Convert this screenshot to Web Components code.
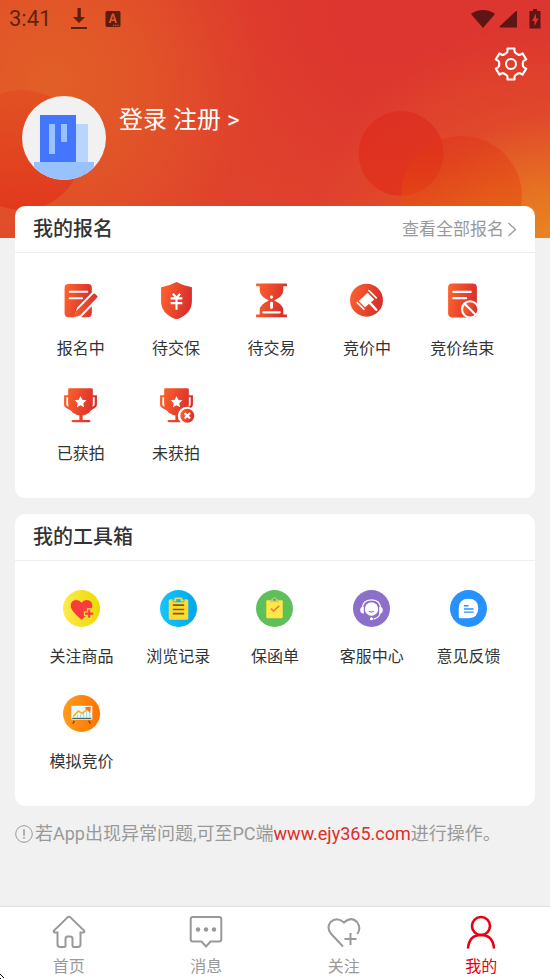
<!DOCTYPE html>
<html lang="zh-CN">
<head>
<meta charset="utf-8">
<meta name="viewport" content="width=device-width, initial-scale=1">
<title>我的</title>
<style>
  body { margin: 0; background: #f1f1f1; color: #333; font-family: Roboto, "Noto Sans CJK SC", sans-serif; }
</style>
</head>
<body>
<my-page></my-page>
<script>
const RED = '<defs><linearGradient id="g" x1="0" x2="1" y1="0" y2=".25"><stop stop-color="#ff652d"/><stop offset="1" stop-color="#d9302c"/></linearGradient></defs>';
const CUP = '<path fill="url(#g)" fill-rule="evenodd" d="M6 2.500q0-1.200 1.200-1.200h21.600q1.200 0 1.200 1.200V8h4v9q0 2.200-1.800 3.300l-4.200 2.500q-2 3.400-7.900 4.900v4.300h5.700q2 0 2 1.200t-2 1.200H11.200q-2 0-2-1.200t2-1.200h5.700v-4.300q-5.900-1.500-8.400-4.900l-4.700-2.500Q2 19.200 2 17V8h4zM6 10H4.200v6.500q0 1.500 1 2.100l1.300.9Q6 18 6 16zM30 10v6q0 2-.5 3.500l1.300-.9q1-.6 1-2.100V10z"/><path fill="#fff" d="m18 8.700 1.700 3.700 4 .5-3 2.800.8 4-3.500-2-3.500 2 .8-4-3-2.800 4-.5z"/>';
const disc = c => `<circle cx="18" cy="18" r="18" fill="${c}"/>`;
const grad = (a, b) => `<defs><linearGradient id="g"><stop stop-color="${a}"/><stop offset="1" stop-color="${b}"/></linearGradient></defs>` + disc('url(#g)');
const ICONS = {
  apply: ['0 0 36 36', RED + '<path fill="url(#g)" d="M6.500 2h19q3.500 0 3.500 3.500v4.800L14.600 25l-2.500 9.300H6.500q-4 0-4-4V6q0-4 4-4z"/><path d="M7.500 9.500h17M7.500 15.800h12" stroke="#fff" stroke-width="2" stroke-linecap="round"/><path fill="url(#g)" d="M30.500 11.500q.8-.7 1.600 0l2.200 2q.8.800 0 1.600L17.500 32.500l-4.600 1.600q-.8 0-.7-.8l1.200-4.500zM29 23.500v6.800q0 4-4 4h-6.500z"/>'],
  shield: ['0 0 36 36', RED + '<path fill="url(#g)" d="M18 0q7 4 15 5v14q0 12-15 17.500Q3 31 3 19V5Q11 4 18 0z"/><path d="m14.500 11.500 3.500 4 3.500-4M18 15.500V27M12.300 16h11.400M12.300 20.500h11.400" fill="none" stroke="#fff" stroke-width="2.100"/>'],
  hourglass: ['0 0 36 36', RED + '<path fill="url(#g)" d="M3 1.500h30v2.700h-3.500V8q0 6-9 10 9 4 9 9.500v4H33v2.700H3v-2.700h3.500v-4q0-5.500 9-9.500-9-4-9-10V4.200H3z"/><path d="M18 14.500v.3M18 20.500v4.300" stroke="#fff" stroke-width="2.800" stroke-linecap="round"/><path d="M10 29.500h16" stroke="#fff" stroke-width="2.200" stroke-linecap="round"/>'],
  hammer: ['0 0 36 36', RED + '<circle cx="18" cy="17.700" r="16" fill="url(#g)"/><path fill="#fff" d="m19 10.500 6.500 6.500-9 7.500-6-6z"/><path d="m20.300 8.300 7.200 7.200M9 20l6.500 6.500" stroke="#fff" stroke-width="1.600" stroke-linecap="round"/><path d="m21 20 6.500 7" stroke="#fff" stroke-width="2.400" stroke-linecap="round"/>'],
  ended: ['0 0 36 36', RED + '<rect x="4" y="1.500" width="28" height="33" rx="4" fill="url(#g)"/><path d="M9 9.500h17M9 15.800h12.500" stroke="#fff" stroke-width="2.200" stroke-linecap="round"/><circle cx="25.300" cy="26.500" r="8.800" fill="#fff"/><circle cx="25.500" cy="26.700" r="6.900" fill="url(#g)"/><path d="m20.300 21.500 10.400 10.400" stroke="#fff" stroke-width="2"/>'],
  won: ['0 0 36 36', RED + CUP],
  lost: ['0 0 36 36', RED + CUP + '<circle cx="28" cy="28" r="8.700" fill="#fff"/><circle cx="28.500" cy="28" r="6.800" fill="url(#g)"/><path d="m25.800 25.300 5.400 5.400m0-5.400-5.400 5.400" stroke="#fff" stroke-width="2.200"/>'],
  favorite: ['0 0 36 36', grad('#ffea4c', '#eadb00') + '<path fill="#f63c3d" d="M18 29Q8 20.500 7.500 16q-.3-6 5.500-6.300 3.300 0 5 2.600 1.700-2.600 5-2.600 5.800.3 5.500 6.300-.5 4.500-10.500 13z"/><path d="M25.500 17.800v10.400M20.300 23h10.400" stroke="#f3e12b" stroke-width="4.600"/><path d="M25.500 19v8M21.500 23h8" stroke="#f63c3d" stroke-width="2"/>'],
  history: ['0 0 36 36', grad('#16c5ff', '#00a7ec') + '<rect x="8.500" y="9" width="19" height="20" rx="1.500" fill="#ffda33"/><path d="M12 9q0 3 2 3h8q2 0 2-3z" fill="#0cb5f4"/><path d="M13 10.300h2V8h6v2.300h2" fill="none" stroke="#ffda33" stroke-width="1.600"/><path d="M12.500 14.700h11M12.500 19h11M12.500 23h11" stroke="#85550a" stroke-width="1.600"/>'],
  guarantee: ['0 0 36 36', disc('#5fbf59') + '<rect x="10" y="10" width="16" height="17.500" rx="1" fill="#ffe747"/><path d="M13.500 11q0-2 2.500-2.300Q16.300 7 18 7t2 1.700q2.500.3 2.500 2.300v1h-9z" fill="#d8c77a"/><circle cx="18" cy="9.500" r="1.300" fill="#4caf50"/><path d="m14.500 18 2.500 2.500 5.500-5" fill="none" stroke="#f07b3a" stroke-width="1.500"/>'],
  service: ['0 0 36 36', disc('#8c6fcb') + '<circle cx="18" cy="18.500" r="6.500" fill="#fff"/><path d="M9 19q0-9.500 9-9.500t9 9.500q0 8-7 9.300" fill="none" stroke="#fff" stroke-width="1.200"/><path d="M10.500 16v7Q7 23 7 19.500T10.500 16zM25.500 16v7q3.500 0 3.500-3.500T25.500 16z" fill="#fff"/><circle cx="18" cy="28" r="1.500" fill="#fff"/><path d="M15.500 20.500q2.500 1.800 5 0" fill="none" stroke="#8c6fcb"/>'],
  feedback: ['0 0 36 36', disc('#2791ff') + '<path d="M18 8.500q9.500 0 9.500 9.300T18 27.500H10q-1.500 0-1.500-1.500v-8.200Q8.500 8.500 18 8.500z" fill="#fff"/><path d="M13.500 15.300h4.500M13.500 18.500h9.500M13.500 21.500h9.500" stroke="#2791ff" stroke-width="1.300"/>'],
  bidding: ['0 0 36 36', grad('#ff9c1c', '#ff7200') + '<path d="M8 10.500h20.500V24H8z" fill="#e5fafc"/><path d="M14 22v-3M17 22v-3M20 22v-5M23 22v-7M26 22v-9" stroke="#95ddeb"/><path d="m10 21 5-5.500 3.500 2.500 6-5" fill="none" stroke="#ffab18" stroke-width="1.500"/><path d="m22 12.500 4.500-.5-.5 4.500z" fill="#ff6d19" stroke="#ff6d19"/><path d="M9 22.700h18.500" stroke="#374b4d"/><path d="m11 25-1.500 3M25 25l1.800 3" stroke="#60483a" stroke-width="1.300"/>'],
  gear: ['0 0 36 36', '<g fill="none" stroke="#fff" stroke-width="2.100" stroke-linejoin="round"><path d="M14.500 2.500h7V5q0 1.500 1.300 2.200l2.200 1.300q1.300.8 2.600 0l1.900-1.100 3.700 6-2.200 1.300q-1.200.8-1.200 2.200v2.200q0 1.400 1.200 2.200l2.200 1.300-3.700 6-1.900-1.100q-1.300-.8-2.600 0l-2.200 1.300q-1.300.7-1.300 2.200v2.500h-7V31q0-1.500-1.300-2.200L11 27.500q-1.300-.8-2.600 0l-1.900 1.100-3.700-6L5 21.300q1.200-.8 1.200-2.200v-2.200Q6.200 15.500 5 14.700l-2.200-1.300 3.700-6 1.900 1.100q1.300.8 2.600 0l2.200-1.300Q14.500 6.500 14.500 5z"/><circle cx="18" cy="18" r="5"/></g>'],
  avatar: ['0 0 84 84', '<defs><clipPath id="c"><circle cx="42" cy="42" r="42"/></clipPath></defs><g clip-path="url(#c)"><path fill="#f1f1f1" d="M0 0h84v84H0z"/><path fill="#b8d4ff" d="M53 28h13v40H53z"/><path fill="#4475ff" d="M18 19h36v48H18z"/><path fill="#98c1ff" d="M27 28h6v30h-6zM39 28h6v18h-6zM12 66h60v18H12z"/></g>'],
  download: ['0 0 16 22', '<path fill="rgba(20,0,0,.65)" d="M6.500 0h3.300v9H14l-6 6-6-6h4.500zM0 19h16v2H0z"/>'],
  lang: ['0 0 16 16', '<path fill="rgba(20,0,0,.65)" fill-rule="evenodd" d="M2 0h12q1.500 0 1.500 1.500V14q0 2-1.500 2H2q-1.500 0-1.500-2V1.500Q.5 0 2 0zm5 2.500L3.800 12h1.900l.7-2h3.100l.7 2h1.900L9 2.500zm1 2.100 1 3.600H7zM8 13.800v1.200h1.200v-1.200zm2.200 0v1.200h1.200v-1.200zm2.200 0v1.200h1.200v-1.200z"/>'],
  wifi: ['0 0 24 20', '<path fill="#5f1514" d="M12 1q6.500 0 12 4L12 19 0 5Q5.500 1 12 1z"/>'],
  signal: ['0 0 18 20', '<path fill="#5f1514" d="M18 2v16.500H1.500Q0 18 1 17L17 2z"/>'],
  battery: ['0 0 12 20', '<path fill="#5f1514" fill-rule="evenodd" d="M4 0h4v2h3.500v17.500H.5V2H4zm3 4.500-4 7.500h2.500v5l4-7.500H7z"/>'],
  chevron: ['0 0 10 18', '<path d="m1.500 3 7 6.500-7 6.500" fill="none" stroke="#999" stroke-width="1.200"/>'],
  notice: ['0 0 18 18', '<circle cx="9" cy="9" r="8.300" fill="none" stroke="#999"/><path d="M9 4.300v6.400M9 12v1.700" stroke="#999" stroke-width="1.500"/>'],
  home: ['0 0 34 34', '<path d="M15.300 2.600 2 15.500q-1 2 1 2h2.500v11.700q0 2.800 2.800 2.800H12q1.500 0 1.500-1.500V24q0-2.500 2-2.500h3q2 0 2 2.500v6.500q0 1.500 1.500 1.500h3.700q2.800 0 2.800-2.800V17.500H31q2 0 1-2L18.700 2.600Q17 1 15.300 2.600z" fill="none" stroke="#999" stroke-width="2"/>'],
  message: ['0 0 34 34', '<path d="M4 2h26q2.300 0 2.300 2.300v20q0 2.200-2.300 2.200h-8.500l-4.500 5-4.500-5H4q-2.300 0-2.300-2.200v-20Q1.700 2 4 2z" fill="none" stroke="#999" stroke-width="2"/><g fill="#999"><circle cx="9" cy="14.500" r="2.200"/><circle cx="17" cy="14.500" r="2.200"/><circle cx="25" cy="14.500" r="2.200"/></g>'],
  heart: ['0 0 34 34', '<path d="M16 31.500 3.800 18.500Q-.5 13 3.300 7.300 10 1 17 7.500q7.500-6.500 13-.5 4.500 6 .3 12M23.500 18v12M17.500 24h12" fill="none" stroke="#999" stroke-width="2"/>'],
  user: ['0 0 34 34', '<g fill="none" stroke="#e60012" stroke-width="2.600"><circle cx="17" cy="11" r="9"/><path d="M4 33.500Q5 20 17 20t13 13.500"/></g>']
};

function define(name, css, html) {
  const tpl = document.createElement('template');
  const build = typeof html === 'function' ? html : () => html;
  customElements.define(name, class extends HTMLElement {
    connectedCallback() {
      if (this.shadowRoot) return;
      tpl.innerHTML = `<style>*{box-sizing:border-box}${css}</style>${build(this)}`;
      this.attachShadow({ mode: 'open' }).append(tpl.content.cloneNode(true));
    }
  });
}

define('ui-icon', ':host{display:block;flex:none}svg{display:block;width:100%;height:100%}', el => {
  const [box, body] = ICONS[el.getAttribute('name')];
  return `<svg viewBox="${box}" aria-hidden="true">${body}</svg>`;
});

define('status-bar', `
  :host{display:flex;align-items:center;height:37px;padding:0 9px;font-size:22px;color:rgba(20,0,0,.65)}
  .space{flex:1}
  .download{width:16px;height:22px;margin:0 18px 0 20px}
  .lang{width:16px;height:16px}
  .wifi{width:24px;height:20px;margin-right:4px}
  .signal{width:18px;height:20px;margin-right:12px}
  .battery{width:12px;height:20px}`,
  `<span>3:41</span><ui-icon class="download" name="download"></ui-icon><ui-icon class="lang" name="lang"></ui-icon><span class="space"></span>
   <ui-icon class="wifi" name="wifi"></ui-icon><ui-icon class="signal" name="signal"></ui-icon><ui-icon class="battery" name="battery"></ui-icon>`);

define('profile-header', `
  :host{display:block;position:relative;padding-bottom:58px;overflow:hidden;
    background:radial-gradient(circle at 100% 108%,#ea8b1e 0,rgba(232,125,32,.8) 70px,rgba(228,90,38,.45) 140px,transparent 240px),
    radial-gradient(circle at 50px 80px,#e25f27 0,rgba(226,88,39,.85) 100px,rgba(224,70,42,.4) 210px,transparent 300px),
    linear-gradient(#dd352f 20%,#df432d)}
  .art{position:absolute;inset:0;width:100%;height:100%}
  .content{position:relative}
  .tools{display:flex;justify-content:flex-end;padding:9px 21px 0}
  button{border:0;padding:0;background:none}
  button ui-icon{width:36px;height:36px}
  .user{display:flex;gap:13px;padding:14px 22px 0}
  .user ui-icon{width:84px;height:84px}
  a{margin-top:6px;font-size:24px;line-height:36px;height:36px;color:#fff;text-decoration:none}`,
  `<svg class="art" viewBox="0 0 550 238" preserveAspectRatio="xMidYMid slice" aria-hidden="true">
     <defs><linearGradient id="a" x1="0" x2="0" y1="0" y2="1"><stop stop-color="#e04a20" stop-opacity=".6"/><stop offset="1" stop-color="#e2361c" stop-opacity=".9"/></linearGradient>
     <linearGradient id="b" x1="0" x2="0" y1="0" y2="1"><stop stop-color="#dc281e" stop-opacity=".6"/><stop offset="1" stop-color="#e2311b" stop-opacity=".85"/></linearGradient>
     <linearGradient id="d" x1="0" x2="0" y1="0" y2="1"><stop stop-color="#df2f15" stop-opacity=".4"/><stop offset="1" stop-color="#ea6b0c" stop-opacity=".75"/></linearGradient></defs>
     <circle cx="22" cy="150" r="60" fill="url(#a)"/><circle cx="401" cy="153.500" r="42.500" fill="url(#b)"/><circle cx="461.500" cy="196.500" r="60.500" fill="url(#d)"/></svg>
   <div class="content"><status-bar></status-bar>
   <div class="tools"><button type="button" aria-label="设置"><ui-icon name="gear"></ui-icon></button></div>
   <div class="user"><ui-icon name="avatar"></ui-icon><a href="#login">登录 注册 &gt;</a></div></div>`);

define('panel-card', `
  :host{display:block;background:#fff;border-radius:10px}
  header{display:flex;align-items:center;justify-content:space-between;height:47px;padding:0 18px;border-bottom:1px solid #eee}
  h2{margin:0;font-size:20px;line-height:30px;font-weight:500}
  .grid{display:grid;grid-template-columns:repeat(5,1fr);row-gap:24px;padding:29px 18px 30px}
  :host([inset]) .grid{padding-right:25px}`,
  el => `<header><h2>${el.getAttribute('heading')}</h2><slot name="more"></slot></header><div class="grid"><slot></slot></div>`);

define('more-link', `
  :host{display:block}
  a{display:flex;align-items:center;gap:3px;font-size:17px;line-height:26px;color:#999;text-decoration:none}
  ui-icon{width:10px;height:18px}`,
  '<a href="#all"><slot></slot><ui-icon name="chevron"></ui-icon></a>');

define('menu-item', `
  :host{display:block}
  a{display:flex;flex-direction:column;align-items:center;gap:16px;font-size:16px;line-height:28px;white-space:nowrap;color:#333;text-decoration:none}
  ui-icon{width:37px;height:37px}`,
  el => `<a href="#${el.getAttribute('icon')}"><ui-icon name="${el.getAttribute('icon')}"></ui-icon><span><slot></slot></span></a>`);

define('help-note', `
  :host{display:block}
  p{display:flex;align-items:center;margin:0;font-size:18px;line-height:28px;color:#999}
  ui-icon{width:18px;height:18px;margin-right:2px}
  a{color:#e02d28;text-decoration:none}`,
  '<p><ui-icon name="notice"></ui-icon><span>若App出现异常问题,可至PC端<a href="#site">www.ejy365.com</a>进行操作。</span></p>');

define('tab-item', `
  :host{display:block;flex:1}
  a{display:flex;flex-direction:column;align-items:center;gap:6px;font-size:16px;line-height:24px;color:#999;text-decoration:none}
  :host([active]) a{color:#e60012}
  ui-icon{width:34px;height:34px}`,
  el => `<a href="#${el.getAttribute('icon')}"${el.hasAttribute('active') ? ' aria-current="page"' : ''}><ui-icon name="${el.getAttribute('icon')}"></ui-icon><span><slot></slot></span></a>`);

define('tab-bar', `
  :host{display:block;background:#fff;border-top:1px solid #e2e2e2}
  nav{display:flex;padding-top:8px}`,
  '<nav><slot></slot></nav>');

define('mouse-pointer', ':host{position:fixed;left:0;bottom:0;width:5px;height:5px}svg{display:block}',
  '<svg width="5" height="5" shape-rendering="crispEdges" aria-hidden="true"><path d="M0 0h1v1H0zM1 1h1v1H1zM2 2h1v1H2zM3 3h1v1H3zM0 4h1v1H0z"/><path fill="#fff" d="M0 1h1v3H0zM1 2h1v2H1z"/></svg>');

define('my-page', `
  :host{display:flex;flex-direction:column;min-height:100vh}
  main{display:flex;flex-direction:column;gap:16px;position:relative;margin-top:-32px;padding:0 15px 16px}
  help-note{margin-top:-2px}
  tab-bar{margin-top:auto}`,
  `<profile-header></profile-header>
  <main>
    <panel-card heading="我的报名" inset>
      <more-link slot="more">查看全部报名</more-link>
      <menu-item icon="apply">报名中</menu-item><menu-item icon="shield">待交保</menu-item><menu-item icon="hourglass">待交易</menu-item><menu-item icon="hammer">竞价中</menu-item><menu-item icon="ended">竞价结束</menu-item><menu-item icon="won">已获拍</menu-item><menu-item icon="lost">未获拍</menu-item>
    </panel-card>
    <panel-card heading="我的工具箱">
      <menu-item icon="favorite">关注商品</menu-item><menu-item icon="history">浏览记录</menu-item><menu-item icon="guarantee">保函单</menu-item><menu-item icon="service">客服中心</menu-item><menu-item icon="feedback">意见反馈</menu-item><menu-item icon="bidding">模拟竞价</menu-item>
    </panel-card>
    <help-note></help-note>
  </main>
  <tab-bar><tab-item icon="home">首页</tab-item><tab-item icon="message">消息</tab-item><tab-item icon="heart">关注</tab-item><tab-item icon="user" active>我的</tab-item></tab-bar>
  <mouse-pointer></mouse-pointer>`);
</script>
</body>
</html>
